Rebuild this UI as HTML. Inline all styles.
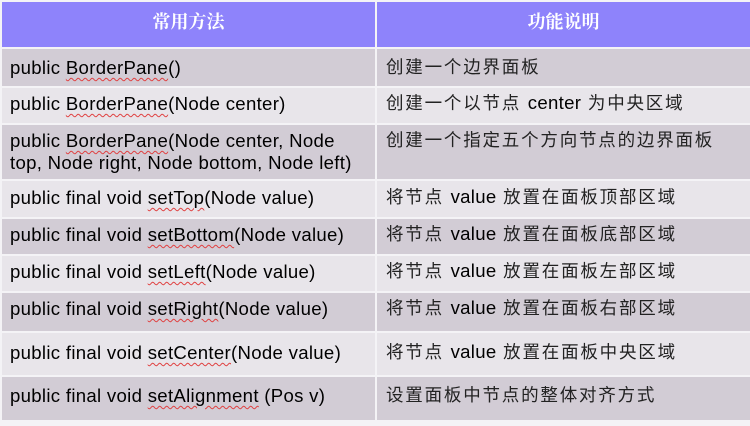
<!DOCTYPE html>
<html><head><meta charset="utf-8"><style>
body{margin:0;width:750px;height:426px;background:#f4f3f6;position:relative;overflow:hidden;font-family:"Liberation Sans","Noto Sans CJK SC",sans-serif;}
.r{position:absolute;left:2px;width:748px;}
.c{position:absolute;top:0;bottom:0;}
.a{left:0;width:373px;}
.b{left:375px;width:373px;}
.h .c{background:#8e83fb;color:#fff;font-weight:bold;font-size:18px;text-align:center;font-family:"Noto Serif CJK SC","Noto Sans CJK SC",serif;padding-top:6px;box-sizing:border-box;}
.o .c{background:#d2ccd5;}
.e .c{background:#e8e5ea;}
.t{position:absolute;left:8px;font-size:18.6px;color:#000;line-height:22px;white-space:nowrap;letter-spacing:0.3px;}
.z{position:absolute;left:9px;font-size:17.5px;color:#222;white-space:nowrap;letter-spacing:1.8px;line-height:22px;}
.z span{letter-spacing:0.3px;font-size:18.6px;color:#000;}
u{text-decoration:underline wavy #e04040 1px;text-underline-offset:3px;}
</style></head><body>
<div class="r h" style="top:2px;height:45px"><div class="c a">常用方法</div><div class="c b">功能说明</div></div>
<div class="r o" style="top:49px;height:37px"><div class="c a"><div class="t" style="top:8px">public <u>BorderPane</u>()</div></div><div class="c b"><div class="z" style="top:7px">创建一个边界面板</div></div></div>
<div class="r e" style="top:88px;height:35px"><div class="c a"><div class="t" style="top:5px">public <u>BorderPane</u>(Node center)</div></div><div class="c b"><div class="z" style="top:4px">创建一个以节点 <span>center</span> 为中央区域</div></div></div>
<div class="r o" style="top:125px;height:54px"><div class="c a"><div class="t" style="top:5px">public <u>BorderPane</u>(Node center, Node<br>top, Node right, Node bottom, Node left)</div></div><div class="c b"><div class="z" style="top:4px">创建一个指定五个方向节点的边界面板</div></div></div>
<div class="r e" style="top:181px;height:36px"><div class="c a"><div class="t" style="top:6px">public final void <u>setTop</u>(Node value)</div></div><div class="c b"><div class="z" style="top:5px">将节点 <span>value</span> 放置在面板顶部区域</div></div></div>
<div class="r o" style="top:219px;height:35px"><div class="c a"><div class="t" style="top:5px">public final void <u>setBottom</u>(Node value)</div></div><div class="c b"><div class="z" style="top:4px">将节点 <span>value</span> 放置在面板底部区域</div></div></div>
<div class="r e" style="top:256px;height:35px"><div class="c a"><div class="t" style="top:5px">public final void <u>setLeft</u>(Node value)</div></div><div class="c b"><div class="z" style="top:4px">将节点 <span>value</span> 放置在面板左部区域</div></div></div>
<div class="r o" style="top:293px;height:38px"><div class="c a"><div class="t" style="top:5px">public final void <u>setRight</u>(Node value)</div></div><div class="c b"><div class="z" style="top:4px">将节点 <span>value</span> 放置在面板右部区域</div></div></div>
<div class="r e" style="top:333px;height:42px"><div class="c a"><div class="t" style="top:9px">public final void <u>setCenter</u>(Node value)</div></div><div class="c b"><div class="z" style="top:8px">将节点 <span>value</span> 放置在面板中央区域</div></div></div>
<div class="r o" style="top:377px;height:43px"><div class="c a"><div class="t" style="top:8px">public final void <u>setAlignment</u> (Pos v)</div></div><div class="c b"><div class="z" style="top:7px">设置面板中节点的整体对齐方式</div></div></div>
</body></html>
